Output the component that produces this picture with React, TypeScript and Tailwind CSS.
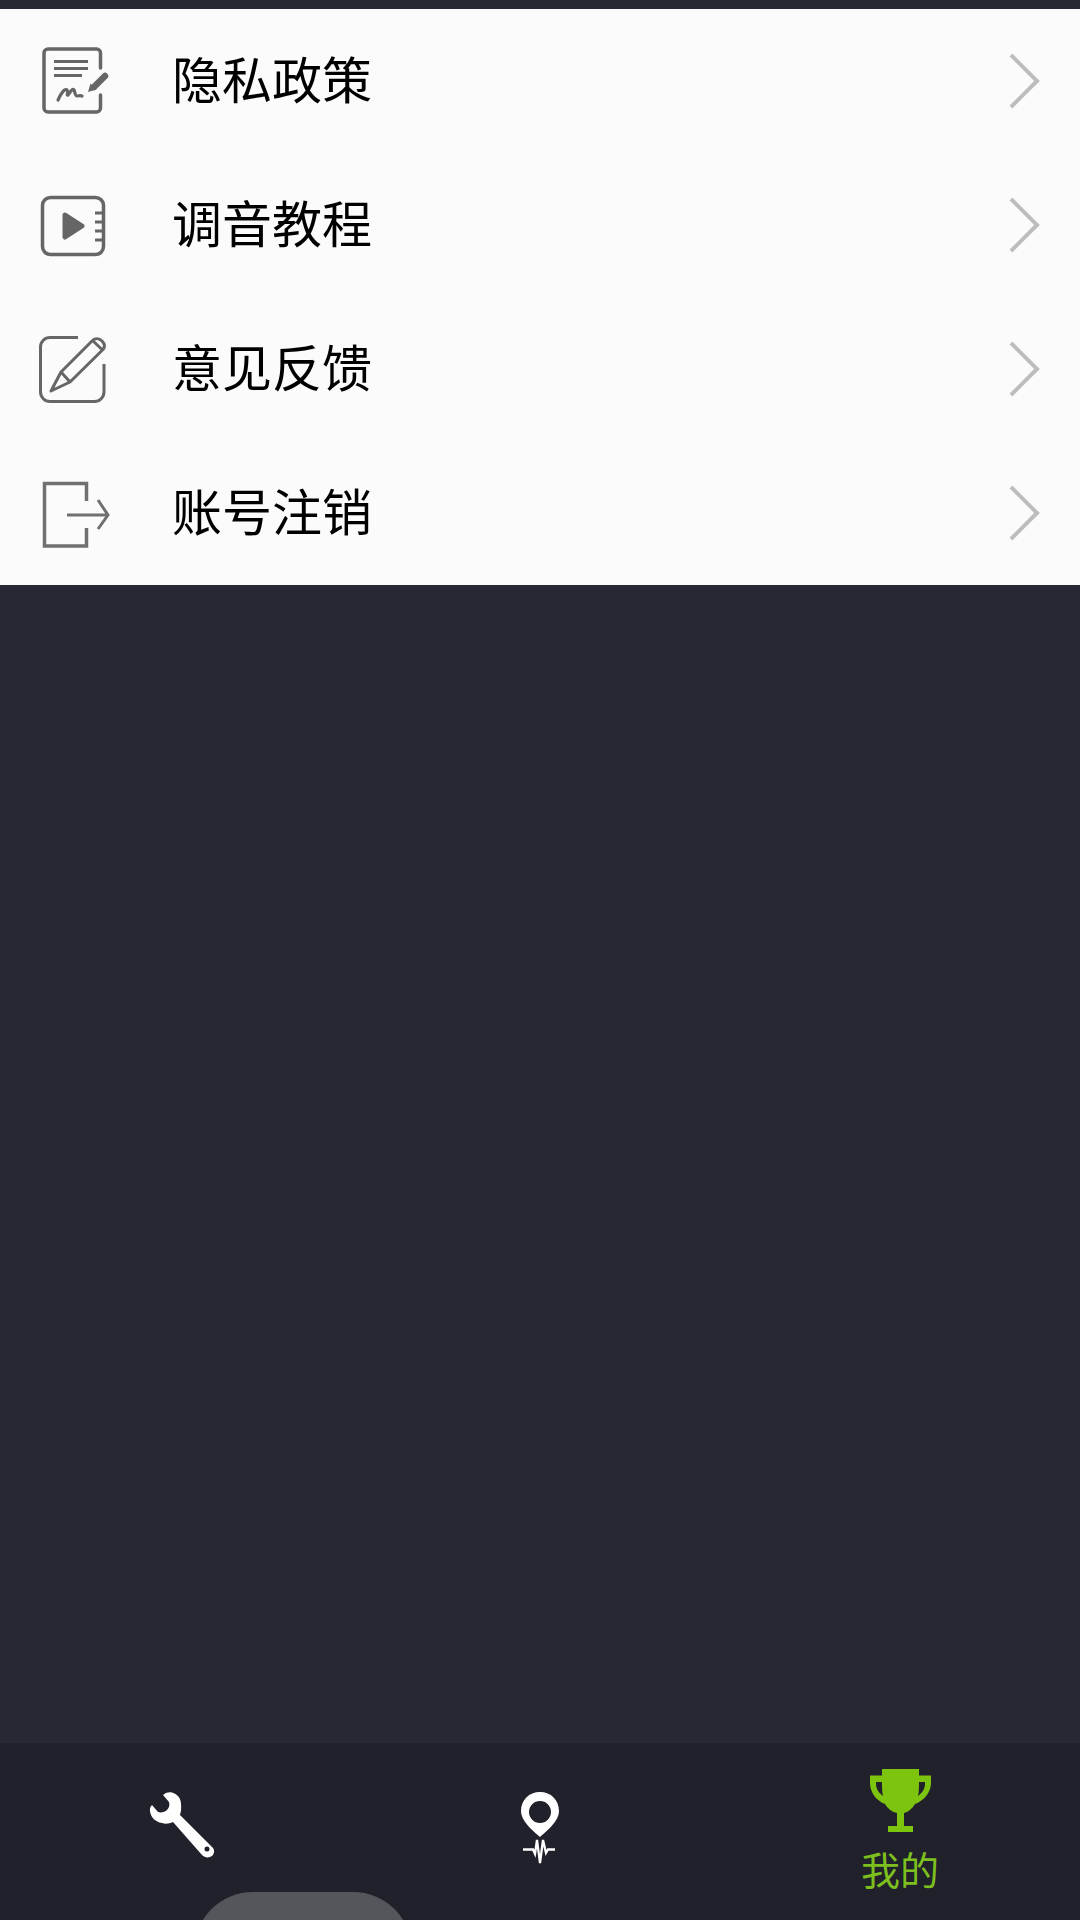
const GRAY = '#666666';

function PolicyIcon({ viewBox }: { viewBox: string }) {
  return (
    <svg width="100" height="100" viewBox={viewBox} fill="none" stroke={GRAY} strokeWidth="3.500" className="shrink-0">
      <path d="M80.500 38V23a4 4 0 0 0-4-4H28a4 4 0 0 0-4 4v55a4 4 0 0 0 4 4h48.500a4 4 0 0 0 4-4V65" strokeLinecap="round" />
      <path d="M34 31.500H68M34 38.500H68M34 45.500H62" strokeWidth="3" />
      <path d="M38 70C41 63 45 58 47 60C49 62 46 66 48 65C50 63 52 58 54 60C55 62 55 66 57 66C59 66 60 65 62 66" strokeWidth="3.200" strokeLinecap="round" />
      <path d="M85 46L74 57" strokeWidth="6.500" strokeLinecap="round" />
      <path d="M68 62L70.500 53.500L76.500 59.500Z" fill={GRAY} stroke="none" />
    </svg>
  );
}

function TutorialIcon({ viewBox }: { viewBox: string }) {
  return (
    <svg width="100" height="100" viewBox={viewBox} fill="none" stroke={GRAY} strokeWidth="3.500" className="shrink-0">
      <rect x="22.500" y="17.500" width="61" height="57" rx="8" />
      <path d="M75 33H84M75 42H84M75 51H84M75 60H84" strokeWidth="3" />
      <path d="M45 35L62 46L45 57Z" fill={GRAY} strokeWidth="5" strokeLinejoin="round" />
    </svg>
  );
}

function FeedbackIcon({ viewBox }: { viewBox: string }) {
  return (
    <svg width="100" height="100" viewBox={viewBox} fill="none" stroke={GRAY} strokeWidth="3" className="shrink-0">
      <path d="M58 17.500H30a9.500 9.500 0 0 0-9.500 9.500v45a9.500 9.500 0 0 0 9.500 9.500h44.500a9.500 9.500 0 0 0 9.500-9.500V44" />
      <path d="M31 71L41 52L72.500 20.500C75 18 79 18 82 21C85 24 85 27 83 29.500L50 62Z" strokeLinejoin="round" />
      <path d="M41 52L50 62M72.500 20.500L82.500 30" />
    </svg>
  );
}

function CancelIcon({ viewBox }: { viewBox: string }) {
  return (
    <svg width="100" height="100" viewBox={viewBox} fill="none" stroke="#707070" strokeWidth="3.500" className="shrink-0">
      <path d="M66.500 36V18.500H24.500V81H66.500V63" />
      <path d="M47 50H88M78 35L88 50L78 64" strokeWidth="3" />
    </svg>
  );
}

function Chevron() {
  return (
    <svg width="100" height="100" viewBox="0 0 100 100" fill="none" stroke="#bdbdbd" strokeWidth="4" className="shrink-0">
      <path d="M31 24L57 50L31 76" />
    </svg>
  );
}

const rows = [
  { label: '隐私政策', Icon: PolicyIcon, viewBox: '0 1 100 100' },
  { label: '调音教程', Icon: TutorialIcon, viewBox: '0 -5 100 100' },
  { label: '意见反馈', Icon: FeedbackIcon, viewBox: '0 -1 100 100' },
  { label: '账号注销', Icon: CancelIcon, viewBox: '0 -2 100 100' },
];

export default function App() {
  return (
    <div className="flex h-[1920px] w-[1080px] flex-col overflow-hidden bg-[#272833] font-['Noto_Sans_CJK_SC','Noto_Sans',sans-serif]">
      <div className="mt-[9px] bg-[#fbfbfb]">
        {rows.map(({ label, Icon, viewBox }) => (
          <div key={label} className="flex h-[144px] items-center pl-[20px]">
            <Icon viewBox={viewBox} />
            <span className="ml-[52px] flex-1 pb-[8px] text-[50px] leading-none text-black">{label}</span>
            <Chevron />
          </div>
        ))}
      </div>

      <div className="flex-1" />

      {/* Bottom tabs */}
      <nav className="relative grid h-[177px] grid-cols-3 overflow-hidden bg-[#20212a]">
        <div className="flex justify-center pt-[37px]">
          <svg width="100" height="100" viewBox="0 0 100 100" fill="#ffffff">
            <path
              fillRule="evenodd"
              d="M33 15C36 12.500 39 12 42 12.500C47 14 51 18 51 24C51.500 28 51 32 50 35L83 68C85 71 84 74 82 76C79 78 75 78 72 75L43 42C39 44 35 44 32 43C25 42 19 36 20 28C20.500 27 21 26 22 25L28 32C31 33 35 32 37 30C39 28 40 25 39 22Z M77 66.500a2.500 2.500 0 1 0 0 5a2.500 2.500 0 1 0 0-5Z"
            />
          </svg>
        </div>
        <div className="flex justify-center pt-[37px]">
          <svg width="100" height="100" viewBox="0 0 100 100" fill="none">
            <path
              fill="#ffffff"
              fillRule="evenodd"
              d="M50 12C61 12 69 20 69 31C69 41 57 51 50 57C43 51 31 41 31 31C31 20 39 12 50 12ZM50 21a11 11 0 1 0 0 22a11 11 0 1 0 0-22Z"
            />
            <path d="M33 69.500H43L45 74L47 60L50 83L53 60L56 73L58 69.500H65" stroke="#ffffff" strokeWidth="2.300" />
          </svg>
        </div>
        <div className="flex flex-col items-center pt-[23px]">
          <svg width="64" height="68" viewBox="88 45 64 68" fill="#7dc40f" className="shrink-0">
            <path
              fillRule="evenodd"
              d="M102 48H139V54.500H151V62C151 72 143 80 135 83C132 88 128 91 124 92V105H133V111H108V105H117V92C112 91 108 88 105 83C97 80 90 72 90 62V54.500H102ZM96 61V63C96 68 99 72 103 75C102 71 102 66 102 61ZM145 61H139C139 66 139 71 138 75C142 72 145 68 145 63Z"
            />
          </svg>
          <span className="mt-[12px] text-[39px] leading-[44px] text-[#7cbf1e]">我的</span>
        </div>
        <div className="absolute left-[194px] top-[149px] h-[120px] w-[218px] rounded-[59px] bg-[#55565c]" />
      </nav>
    </div>
  );
}
